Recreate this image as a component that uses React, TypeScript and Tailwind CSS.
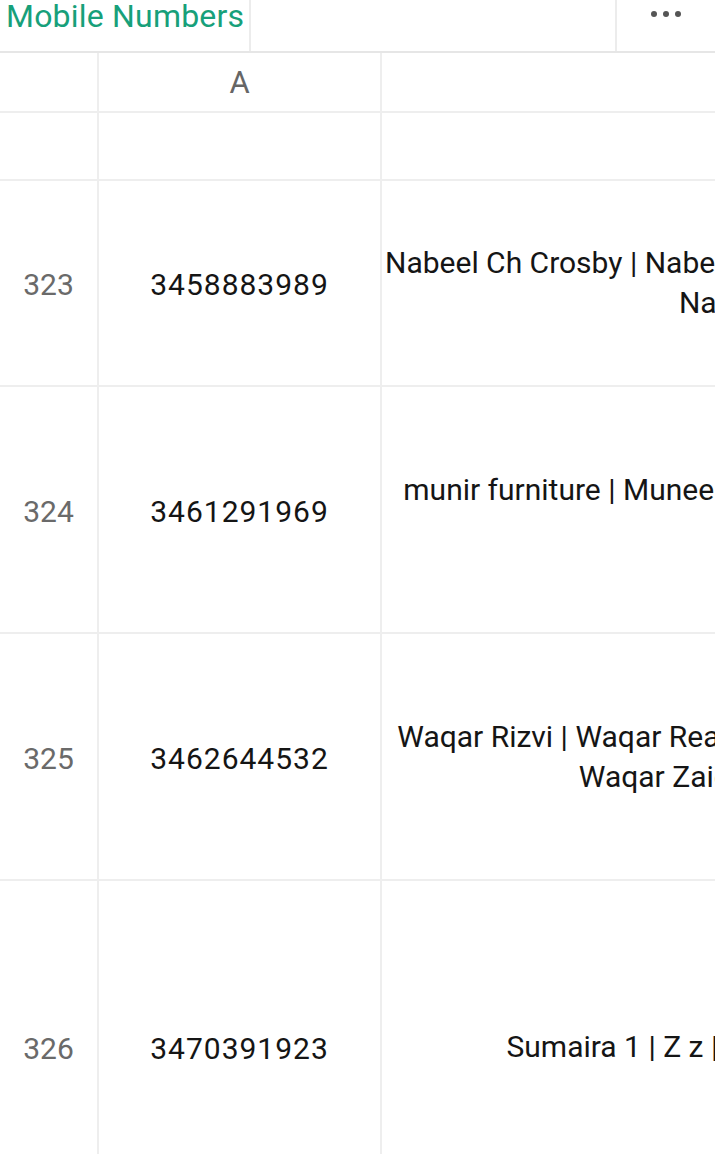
const FONT = "font-['Roboto','Noto_Sans',sans-serif]";

interface Row {
  num: number;
  phone: string;
  names: string[];
  height: string;
}

const ROWS: Row[] = [
  {
    num: 323,
    phone: "3458883989",
    names: [
      "Nabeel Ch Crosby | Nabeel Chaudhry | Nabeel Ch Crosby Home | Nabeel Ch",
      "Nabeel Ahmad Chaudhry Sahb",
    ],
    height: "h-[206px]",
  },
  {
    num: 324,
    phone: "3461291969",
    names: ["munir furniture | Muneer Furniture House | Munir Ahmed | Munir Sahab 1", "Munir"],
    height: "h-[247px]",
  },
  {
    num: 325,
    phone: "3462644532",
    names: [
      "Waqar Rizvi | Waqar Real Estates | Waqar Rizvi Offices | Waqar Properties",
      "Waqar Zaidi | Waqar Zaidi Sahab | Waqar Bhai",
    ],
    height: "h-[247px]",
  },
  {
    num: 326,
    phone: "3470391923",
    names: ["Sumaira 1 | Z z | Sumaira Baji | Sumaira Khan | Sumaira 2"],
    height: "h-[334px]",
  },
];

function TopBar() {
  return (
    <div className="flex h-[53px] border-b-2 border-[#e6e6e6] bg-white">
      <div className="w-[251px] shrink-0 border-r-2 border-[#ececec] pl-[6px]">
        <span className="block whitespace-nowrap text-[32px] leading-none tracking-[0.2px] text-[#17a07a]">
          Mobile Numbers
        </span>
      </div>
      <div className="w-[366px] shrink-0 border-r-2 border-[#ececec]" />
      <div className="flex flex-1 items-start justify-center pt-[11px]">
        <span className="flex gap-[6px]">
          <span className="h-[6px] w-[6px] rounded-full bg-[#555]" />
          <span className="h-[6px] w-[6px] rounded-full bg-[#555]" />
          <span className="h-[6px] w-[6px] rounded-full bg-[#555]" />
        </span>
      </div>
    </div>
  );
}

function GridRow({ row }: { row: Row }) {
  return (
    <div className={`flex ${row.height} border-b-2 border-[#eeeeee]`}>
      <div className="flex w-[99px] shrink-0 items-center justify-center border-r-2 border-[#eeeeee] pt-[3px] text-[30px] text-[#6a6a6a]">
        {row.num}
      </div>
      <div className="flex w-[283px] shrink-0 items-center justify-center border-r-2 border-[#eeeeee] pt-[3px] text-[30px] tracking-[1px] text-[#151515]">
        {row.phone}
      </div>
      <div className="flex w-[1000px] shrink-0 flex-col items-center justify-center overflow-hidden px-[3px] text-center text-[30px] leading-[40px] text-[#151515]">
        {row.names.map((line) => (
          <span className="block w-full whitespace-nowrap" key={line}>
            {line}
          </span>
        ))}
      </div>
    </div>
  );
}

export default function App() {
  return (
    <div className={`h-[1154px] w-[715px] overflow-hidden bg-white ${FONT}`}>
      <TopBar />
      <div className="w-[1382px]">
        <div className="flex h-[60px] border-b-2 border-[#eeeeee]">
          <div className="w-[99px] shrink-0 border-r-2 border-[#eeeeee]" />
          <div className="flex w-[283px] shrink-0 items-center justify-center border-r-2 border-[#eeeeee] pt-[3px] text-[31px] text-[#666]">
            A
          </div>
          <div className="w-[1000px] shrink-0" />
        </div>
        <div className="flex h-[68px] border-b-2 border-[#eeeeee]">
          <div className="w-[99px] shrink-0 border-r-2 border-[#eeeeee]" />
          <div className="w-[283px] shrink-0 border-r-2 border-[#eeeeee]" />
          <div className="w-[1000px] shrink-0" />
        </div>
        {ROWS.map((row) => (
          <GridRow key={row.num} row={row} />
        ))}
      </div>
    </div>
  );
}
